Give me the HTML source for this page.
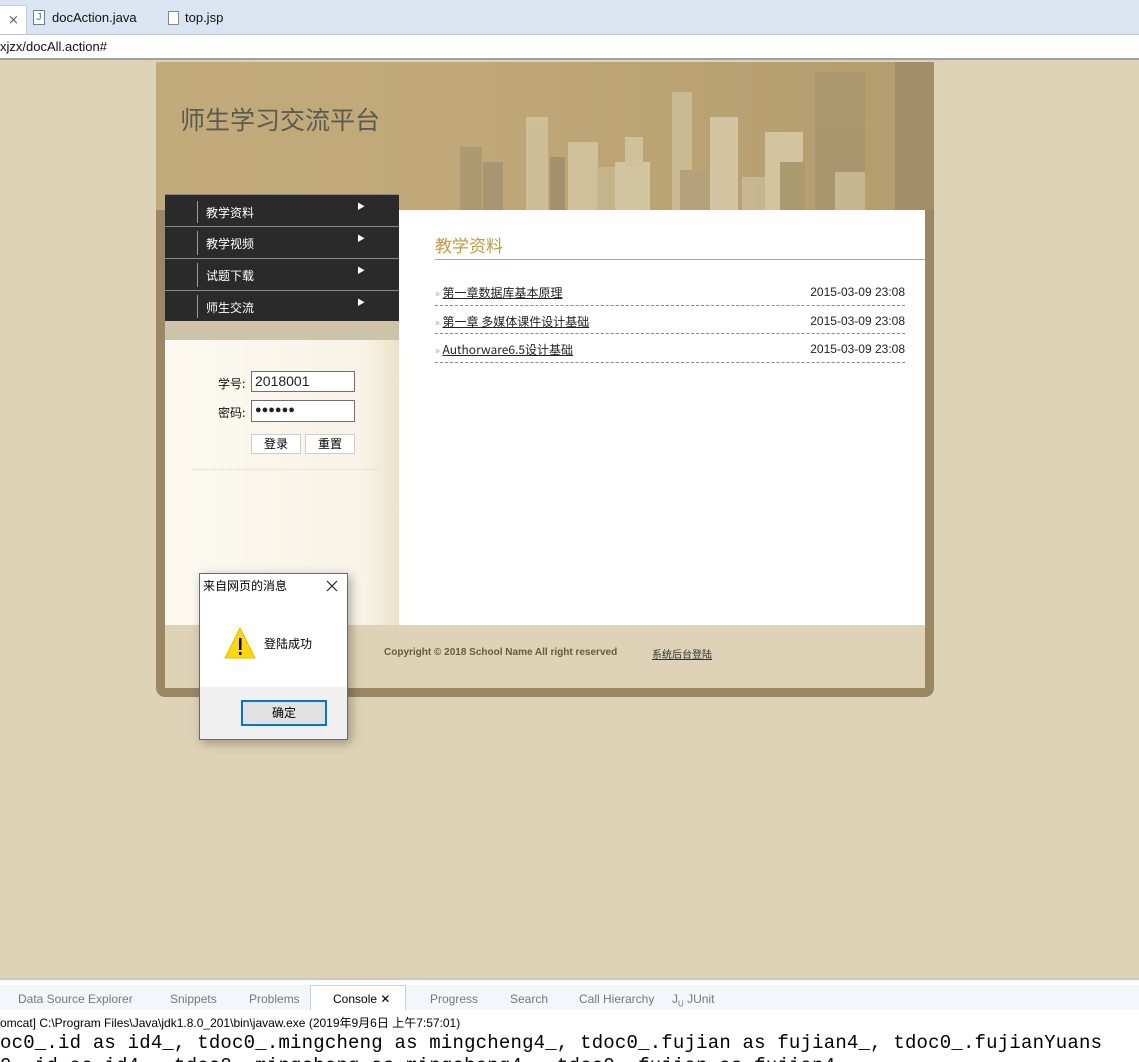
<!DOCTYPE html>
<html><head><meta charset="utf-8"><style>
*{margin:0;padding:0;box-sizing:border-box}
html,body{width:1139px;height:1062px;overflow:hidden}
body{background:#ded3b6;font-family:"Liberation Sans","Noto Sans CJK SC",sans-serif;position:relative}
.abs{position:absolute}
.cn{font-family:"Noto Sans CJK SC",sans-serif}
</style></head><body>
<div class="abs" style="left:0;top:0;width:1139px;height:35px;background:#dbe5f1;border-bottom:1px solid #b9c8dc"></div>
<div class="abs" style="left:0;top:5px;width:27px;height:29px;background:#fff;border:1px solid #c5d1e0;border-left:none;border-bottom:none;font-size:13px;padding:6px 0 0 8px;color:#555">⨯</div>
<div class="abs" style="left:33px;top:10px;width:12px;height:15px;border:1px solid #6a7c96;background:#fff;font-size:10px;color:#3569b0;text-align:center;line-height:13px">J</div>
<div class="abs" style="left:52px;top:10px;font-size:13px;color:#111">docAction.java</div>
<div class="abs" style="left:168px;top:11px;width:11px;height:14px;border:1px solid #888;background:#fff"></div>
<div class="abs" style="left:185px;top:10px;font-size:13px;color:#111">top.jsp</div>
<div class="abs" style="left:0;top:35px;width:1139px;height:25px;background:#fff;border-bottom:2px solid #a0a0a0"></div>
<div class="abs" style="left:0;top:39px;font-size:13px;color:#111">xjzx/docAll.action#</div>

<div class="abs" style="left:156px;top:62px;width:778px;height:635px;background:#9a8862;border-radius:0 0 9px 9px"></div>
<div class="abs" style="left:156px;top:62px;width:778px;height:148px;background:linear-gradient(90deg,#c2ab7b 0%,#c0a878 40%,#b39c6d 100%)"></div>
<svg class="abs" style="left:440px;top:62px" width="494" height="148">
<g opacity=".85">
<rect x="20" y="85" width="22" height="63" fill="#ab9870"/>
<rect x="43" y="100" width="20" height="48" fill="#a69370"/>
<rect x="86" y="55" width="22" height="93" fill="#d2c29c"/>
<rect x="110" y="95" width="15" height="53" fill="#a08d68"/>
<rect x="128" y="80" width="30" height="68" fill="#d4c5a0"/>
<rect x="157" y="105" width="22" height="43" fill="#c8b890"/>
<rect x="175" y="100" width="35" height="48" fill="#d9cbaa"/>
<rect x="185" y="75" width="18" height="30" fill="#d5c6a3"/>
<rect x="232" y="30" width="20" height="118" fill="#cfbe98"/>
<rect x="240" y="108" width="35" height="40" fill="#b6a37c"/>
<rect x="270" y="55" width="28" height="93" fill="#d9cbaa"/>
<rect x="302" y="115" width="25" height="33" fill="#cbbb96"/>
<rect x="325" y="70" width="38" height="78" fill="#d8caa8"/>
<rect x="340" y="100" width="25" height="48" fill="#aa986f"/>
<rect x="375" y="10" width="50" height="138" fill="#a8956d"/>
<rect x="395" y="110" width="30" height="38" fill="#cbbb95"/>
<rect x="455" y="0" width="39" height="148" fill="#a08d66"/>
</g>
</svg>
<div class="abs cn" style="left:180px;top:101px;font-size:25px;color:#5c5a50">师生学习交流平台</div>

<div class="abs" style="left:165px;top:194px;width:234px;height:127px;background:#2a2a2a;border-top:1px solid #888"></div>
<div class="abs cn" style="left:165px;top:195px;width:234px;font-size:12px;color:#fff">
<div style="height:31.5px;border-bottom:1px solid #8a8a8a;position:relative"><span style="position:absolute;left:32px;top:6px;height:22px;border-left:1px solid #999"></span><span style="position:absolute;left:41px;top:9px">教学资料</span><span style="position:absolute;left:192px;top:6px;font-size:8px">▶</span></div>
<div style="height:32px;border-bottom:1px solid #8a8a8a;position:relative"><span style="position:absolute;left:32px;top:4px;height:24px;border-left:1px solid #999"></span><span style="position:absolute;left:41px;top:8px">教学视频</span><span style="position:absolute;left:192px;top:6px;font-size:8px">▶</span></div>
<div style="height:32px;border-bottom:1px solid #8a8a8a;position:relative"><span style="position:absolute;left:32px;top:4px;height:24px;border-left:1px solid #999"></span><span style="position:absolute;left:41px;top:8px">试题下载</span><span style="position:absolute;left:192px;top:6px;font-size:8px">▶</span></div>
<div style="height:31px;position:relative"><span style="position:absolute;left:32px;top:4px;height:23px;border-left:1px solid #999"></span><span style="position:absolute;left:41px;top:8px">师生交流</span><span style="position:absolute;left:192px;top:6px;font-size:8px">▶</span></div>
</div>
<div class="abs" style="left:165px;top:321px;width:234px;height:19px;background:#cdc3a8"></div>
<div class="abs" style="left:165px;top:340px;width:234px;height:285px;background:linear-gradient(90deg,#fcf9f1 0%,#f8f3e6 85%,#ece2c9 100%)"></div>
<div class="abs cn" style="left:218px;top:375px;font-size:12px;color:#111">学号:</div>
<div class="abs" style="left:251px;top:371px;width:104px;height:21px;border:1px solid #707070;background:#fff;font-size:14px;padding:1px 3px;color:#222">2018001</div>
<div class="abs cn" style="left:218px;top:404px;font-size:12px;color:#111">密码:</div>
<div class="abs" style="left:251px;top:400px;width:104px;height:22px;border:1px solid #707070;background:#fff;font-size:11px;padding:3px 3px;color:#222">●●●●●●</div>
<div class="abs cn" style="left:251px;top:434px;width:50px;height:20px;border:1px solid #ccc;background:#fff;font-size:12px;text-align:center;line-height:18px">登录</div>
<div class="abs cn" style="left:305px;top:434px;width:50px;height:20px;border:1px solid #ccc;background:#fff;font-size:12px;text-align:center;line-height:18px">重置</div>
<div class="abs" style="left:193px;top:469px;width:185px;border-top:1px dotted #d8d2c0"></div>

<div class="abs" style="left:399px;top:210px;width:526px;height:415px;background:#fff"></div>
<div class="abs cn" style="left:435px;top:232px;font-size:17px;color:#c39a3c">教学资料</div>
<div class="abs" style="left:435px;top:259px;width:490px;border-top:1px solid #b6a890"></div>
<div class="abs cn" style="left:435px;top:284px;width:470px;font-size:12px;color:#222">
<div style="height:22px;border-bottom:1px dashed #888;position:relative"><span style="color:#9a9ac8;font-size:10px">»</span> <u>第一章数据库基本原理</u><span style="position:absolute;right:0;top:1px;font-family:'Liberation Sans'">2015-03-09 23:08</span></div>
<div style="height:28px;border-bottom:1px dashed #888;position:relative;padding-top:7px"><span style="color:#9a9ac8;font-size:10px">»</span> <u>第一章 多媒体课件设计基础</u><span style="position:absolute;right:0;top:8px;font-family:'Liberation Sans'">2015-03-09 23:08</span></div>
<div style="height:29px;border-bottom:1px dashed #888;position:relative;padding-top:7px"><span style="color:#9a9ac8;font-size:10px">»</span> <u>Authorware6.5设计基础</u><span style="position:absolute;right:0;top:8px;font-family:'Liberation Sans'">2015-03-09 23:08</span></div>
</div>

<div class="abs" style="left:165px;top:625px;width:760px;height:63px;background:#ded3b6"></div>
<div class="abs" style="left:384px;top:647px;font-size:10px;font-weight:bold;color:#6a5a3a">Copyright © 2018 School Name All right reserved</div>
<div class="abs cn" style="left:652px;top:646px;font-size:10px;color:#333;text-decoration:underline">系统后台登陆</div>

<div class="abs" style="left:199px;top:573px;width:149px;height:167px;background:#fff;border:1px solid #6a6a6a;box-shadow:3px 3px 10px rgba(0,0,0,.3)"></div>
<div class="abs cn" style="left:203px;top:577px;font-size:12px;color:#000">来自网页的消息</div>
<svg class="abs" style="left:326px;top:580px" width="12" height="12"><path d="M1 1L11 11M11 1L1 11" stroke="#222" stroke-width="1.2"/></svg>
<svg class="abs" style="left:224px;top:626px" width="32" height="34"><polygon points="16,2 31,32 1,32" fill="#ffd800" stroke="#e8b800"/><rect x="15" y="12" width="2.5" height="12" fill="#000"/><rect x="15" y="26" width="2.5" height="3" fill="#000"/></svg>
<div class="abs cn" style="left:264px;top:635px;font-size:12px;color:#000">登陆成功</div>
<div class="abs" style="left:200px;top:687px;width:147px;height:52px;background:#f0f0f0"></div>
<div class="abs cn" style="left:241px;top:700px;width:86px;height:26px;border:2px solid #0078d7;background:#e1e1e1;font-size:12px;text-align:center;line-height:22px">确定</div>

<div class="abs" style="left:0;top:978px;width:1139px;height:84px;background:#fff;border-top:2px solid #c9c9c9;overflow:hidden">
<div class="abs" style="left:0;top:5px;width:1139px;height:25px;background:#f3f6fb"></div>
<div class="abs" style="left:310px;top:5px;width:96px;height:25px;background:#fff;border:1px solid #c5d1e0;border-bottom:none"></div>
<div class="abs" style="left:0;top:12px;font-size:12px;color:#777;white-space:nowrap">
<span style="position:absolute;left:18px">Data Source Explorer</span>
<span style="position:absolute;left:170px">Snippets</span>
<span style="position:absolute;left:249px">Problems</span>
<span style="position:absolute;left:333px;color:#000">Console ✕</span>
<span style="position:absolute;left:430px">Progress</span>
<span style="position:absolute;left:510px">Search</span>
<span style="position:absolute;left:579px">Call Hierarchy</span>
<span style="position:absolute;left:672px">J<sub style="font-size:8px">U</sub> JUnit</span>
</div>
<div class="abs" style="left:0;top:34px;font-size:12px;color:#000;white-space:nowrap">omcat] C:\Program Files\Java\jdk1.8.0_201\bin\javaw.exe (2019年9月6日 上午7:57:01)</div>
<div class="abs" style="left:0;top:52px;font-family:'Liberation Mono',monospace;font-size:19px;color:#000;white-space:nowrap;letter-spacing:0.2px">oc0_.id as id4_, tdoc0_.mingcheng as mingcheng4_, tdoc0_.fujian as fujian4_, tdoc0_.fujianYuans</div>
<div class="abs" style="left:0;top:75px;font-family:'Liberation Mono',monospace;font-size:19px;color:#000;white-space:nowrap;letter-spacing:0.2px">0_.id as id4_, tdoc0_.mingcheng as mingcheng4_, tdoc0_.fujian as fujian4_</div>
</div>
</body></html>
